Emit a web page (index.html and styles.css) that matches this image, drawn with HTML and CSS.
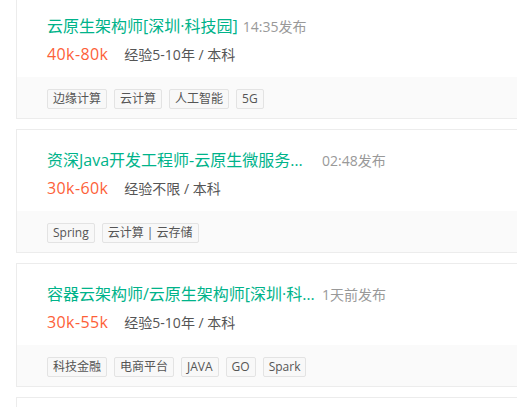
FILE: index.html
```html
<!DOCTYPE html>
<html lang="zh-CN">
<head>
  <meta charset="UTF-8" />
  <meta name="viewport" content="width=device-width, initial-scale=1.0"/>
  <title>职位列表</title>
  <link rel="stylesheet" href="styles.css">
</head>
<body>
  <ul class="job-list">
    <li class="job">
      <div class="job-top">
        <div class="job-head">
          <a class="job-name" href="#">云原生架构师[深圳·科技园]</a>
          <span class="job-time">14:35发布</span>
        </div>
        <div class="job-info">
          <span class="money">40k-80k</span>
          <span class="require">经验5-10年 / 本科</span>
        </div>
      </div>
      <div class="job-tags">
        <span>边缘计算</span>
        <span>云计算</span>
        <span>人工智能</span>
        <span>5G</span>
      </div>
    </li>
    <li class="job">
      <div class="job-top">
        <div class="job-head">
          <a class="job-name" href="#">资深Java开发工程师-云原生微服务方向</a>
          <span class="job-time">02:48发布</span>
        </div>
        <div class="job-info">
          <span class="money">30k-60k</span>
          <span class="require">经验不限 / 本科</span>
        </div>
      </div>
      <div class="job-tags">
        <span>Spring</span>
        <span>云计算 | 云存储</span>
      </div>
    </li>
    <li class="job">
      <div class="job-top">
        <div class="job-head">
          <a class="job-name" href="#">容器云架构师/云原生架构师[深圳·科技园]</a>
          <span class="job-time">1天前发布</span>
        </div>
        <div class="job-info">
          <span class="money">30k-55k</span>
          <span class="require">经验5-10年 / 本科</span>
        </div>
      </div>
      <div class="job-tags">
        <span>科技金融</span>
        <span>电商平台</span>
        <span>JAVA</span>
        <span>GO</span>
        <span>Spark</span>
      </div>
    </li>
    <li class="job">
      <div class="job-top">
        <div class="job-head">
          <a class="job-name" href="#">云原生开发工程师</a>
          <span class="job-time">2天前发布</span>
        </div>
      </div>
    </li>
  </ul>
</body>
</html>
```

FILE: styles.css
```css
* {
  box-sizing: border-box;
}

body {
  margin: 0;
  background: #fff;
  font-family: "Open Sans", "Noto Sans CJK SC", sans-serif;
  overflow: hidden;
}

.job-list {
  list-style: none;
  margin: -5px 0 0;
  padding: 0 0 0 16px;
  width: 620px;
}

.job {
  border: 1px solid #ececec;
  margin-bottom: 10px;
  background: #fff;
}

.job-top {
  padding: 20px 30px 13px;
}

.job-head {
  display: flex;
  align-items: center;
  height: 20px;
}

.job-name {
  color: #00b38a;
  font-size: 16px;
  line-height: 20px;
  text-decoration: none;
  max-width: 270px;
  white-space: nowrap;
  overflow: hidden;
  text-overflow: ellipsis;
}

.job-time {
  color: #999;
  font-size: 14px;
  margin-left: 5px;
  white-space: nowrap;
}

.job-info {
  display: flex;
  align-items: center;
  height: 20px;
  margin-top: 8px;
}

.money {
  color: #fd5f39;
  font-size: 16px;
  letter-spacing: 0.4px;
}

.require {
  color: #555;
  font-size: 14px;
  margin-left: 16px;
}

.job-tags {
  background: #fafafa;
  padding: 12px 30px 9px;
  display: flex;
  gap: 7px;
}

.job-tags span {
  display: inline-block;
  height: 20px;
  line-height: 18px;
  padding: 0 5px;
  font-size: 12px;
  color: #555;
  background: #f8f8f8;
  border: 1px solid #e3e3e3;
  border-radius: 2px;
}
```
